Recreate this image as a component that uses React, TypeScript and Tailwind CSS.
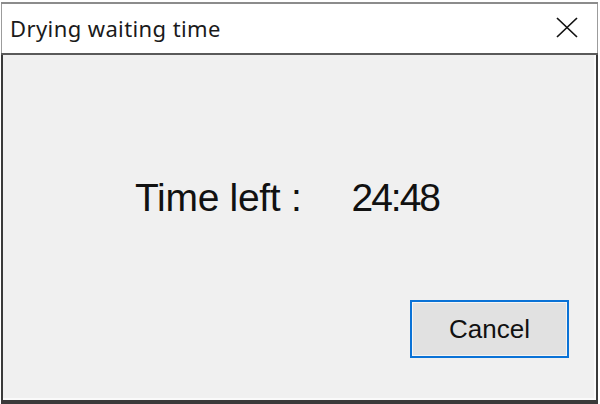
export default function App() {
  return (
    <div className="w-[600px] h-[404px] bg-white pt-[2px] pl-[1px] pr-[2px] font-['Liberation_Sans',Arial,sans-serif] text-black">
      <div className="h-full flex flex-col border-t-2 border-[#8c8c8c]">
        <div className="h-[49px] shrink-0 bg-white border-x border-[#9c9c9c] flex items-center justify-between pl-[8px] pr-[19px]">
          <span className="font-['Noto_Sans',sans-serif] text-[22px] tracking-[0.4px] leading-none text-[#1a1a1a] -mt-[2px]">
            Drying waiting time
          </span>
          <svg width="22" height="21" viewBox="0 0 22 21" className="-mt-[2px]">
            <path d="M1 1 L21 20 M21 1 L1 20" stroke="#111" strokeWidth="1.7" fill="none" />
          </svg>
        </div>
        <div className="h-[2px] shrink-0 bg-[#5a5a5a]" />
        <div className="flex-1 flex flex-col bg-[#f0f0f0] border-l-2 border-r-2 border-b-[4px] border-[#3a3a3a] shadow-[inset_-2px_-2px_0_#fafafa]">
          <div className="mt-[120px] pl-[132px] flex items-baseline text-[39px] leading-[46px] text-[#111]">
            <span className="tracking-[-0.3px]">Time left :</span>
            <span className="ml-[50px] tracking-[-2px]">24:48</span>
          </div>
          <div className="mt-[79px] mr-[27px] self-end w-[159px] h-[58px] border-2 border-[#0a72d6] bg-[#e1e1e1] shadow-[inset_0_0_0_1px_#f5f5f5] flex items-center justify-center text-[26px] leading-none text-[#111]">
            Cancel
          </div>
        </div>
      </div>
    </div>
  );
}
